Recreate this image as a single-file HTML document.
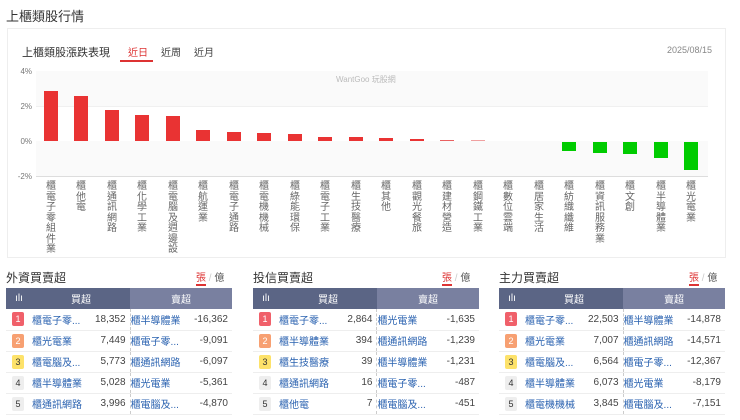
<!DOCTYPE html><html><head><meta charset="utf-8"><style>
*{margin:0;padding:0;box-sizing:border-box}
body{width:740px;height:420px;background:#fff;font-family:"Liberation Sans","Noto Sans CJK TC",sans-serif;position:relative;overflow:hidden;color:#333}
.a{position:absolute}
.lbl{position:absolute;font-size:10px;line-height:10.5px;color:#666;width:12px;text-align:center}
.bar{position:absolute;width:14px}
.yl{position:absolute;left:14px;font-size:8px;color:#777;width:18px;text-align:right}
table{border-collapse:collapse;font-size:10px}
.tb{position:absolute;top:288px;width:226px}
.tb td{height:21px;border-bottom:1px solid #eee}
.hd td{background:#5b6585;color:#fff;text-align:center;height:21px;border:none}
.hd td.r{background:#7980a0}
.rk{display:inline-block;width:12px;height:14px;line-height:14px;text-align:center;font-size:9px;border-radius:2px;margin-left:6px}
.n{color:#2a62b0}
.v{text-align:right;color:#444;padding-right:4px}
.sep{border-left:1px dashed #ccc}
.tt{position:absolute;top:269px;font-size:12px;color:#333}
.tg{position:absolute;top:269px;font-size:10px;color:#555}
</style></head><body>
<div class="a" style="left:6px;top:6px;font-size:13px;color:#333">上櫃類股行情</div>
<div class="a" style="left:7px;top:28px;width:719px;height:230px;border:1px solid #eee"></div>
<div class="a" style="left:22px;top:44px;font-size:11px">上櫃類股漲跌表現</div>
<div class="a" style="left:128px;top:44px;font-size:10px;color:#d33">近日</div>
<div class="a" style="left:120px;top:60px;width:33px;height:2px;background:#d33"></div>
<div class="a" style="left:161px;top:44px;font-size:10px;color:#444">近周</div>
<div class="a" style="left:194px;top:44px;font-size:10px;color:#444">近月</div>
<div class="a" style="left:667px;top:45px;font-size:9px;color:#888">2025/08/15</div>
<div class="a" style="left:36px;top:71px;width:672px;height:35px;background:#fafafa"></div>
<div class="a" style="left:36px;top:141px;width:672px;height:35px;background:#fafafa"></div>
<div class="a" style="left:36px;top:106px;width:672px;height:1px;background:#f0f0f0"></div>
<div class="a" style="left:36px;top:176px;width:672px;height:1px;background:#ddd"></div>
<div class="a" style="left:336px;top:74px;font-size:8px;color:#bbb">WantGoo 玩股網</div>
<div class="yl" style="top:67px">4%</div><div class="yl" style="top:102px">2%</div><div class="yl" style="top:137px">0%</div><div class="yl" style="top:172px">-2%</div>
<div class="bar" style="left:44px;top:91px;height:50px;background:#e93333"></div>
<div class="bar" style="left:74px;top:96px;height:45px;background:#e93333"></div>
<div class="bar" style="left:105px;top:110px;height:31px;background:#e93333"></div>
<div class="bar" style="left:135px;top:115px;height:26px;background:#e93333"></div>
<div class="bar" style="left:166px;top:116px;height:25px;background:#e93333"></div>
<div class="bar" style="left:196px;top:130px;height:11px;background:#e93333"></div>
<div class="bar" style="left:227px;top:132px;height:9px;background:#e93333"></div>
<div class="bar" style="left:257px;top:133px;height:8px;background:#e93333"></div>
<div class="bar" style="left:288px;top:134px;height:7px;background:#e93333"></div>
<div class="bar" style="left:318px;top:137px;height:4px;background:#e93333"></div>
<div class="bar" style="left:349px;top:137px;height:4px;background:#e93333"></div>
<div class="bar" style="left:379px;top:138px;height:3px;background:#e93333"></div>
<div class="bar" style="left:410px;top:139px;height:2px;background:#e93333"></div>
<div class="bar" style="left:440px;top:140px;height:1px;background:#e96060"></div>
<div class="bar" style="left:471px;top:140px;height:1px;background:#f0a0a0"></div>
<div class="bar" style="left:562px;top:142px;height:9px;background:#0c0"></div>
<div class="bar" style="left:593px;top:142px;height:11px;background:#0c0"></div>
<div class="bar" style="left:623px;top:142px;height:12px;background:#0c0"></div>
<div class="bar" style="left:654px;top:142px;height:16px;background:#0c0"></div>
<div class="bar" style="left:684px;top:142px;height:28px;background:#0c0"></div>
<div class="lbl" style="left:45px;top:182px">櫃<br>電<br>子<br>零<br>組<br>件<br>業</div>
<div class="lbl" style="left:75px;top:182px">櫃<br>他<br>電</div>
<div class="lbl" style="left:106px;top:182px">櫃<br>通<br>訊<br>網<br>路</div>
<div class="lbl" style="left:136px;top:182px">櫃<br>化<br>學<br>工<br>業</div>
<div class="lbl" style="left:167px;top:182px">櫃<br>電<br>腦<br>及<br>週<br>邊<br>設</div>
<div class="lbl" style="left:197px;top:182px">櫃<br>航<br>運<br>業</div>
<div class="lbl" style="left:228px;top:182px">櫃<br>電<br>子<br>通<br>路</div>
<div class="lbl" style="left:258px;top:182px">櫃<br>電<br>機<br>機<br>械</div>
<div class="lbl" style="left:289px;top:182px">櫃<br>綠<br>能<br>環<br>保</div>
<div class="lbl" style="left:319px;top:182px">櫃<br>電<br>子<br>工<br>業</div>
<div class="lbl" style="left:350px;top:182px">櫃<br>生<br>技<br>醫<br>療</div>
<div class="lbl" style="left:380px;top:182px">櫃<br>其<br>他</div>
<div class="lbl" style="left:411px;top:182px">櫃<br>觀<br>光<br>餐<br>旅</div>
<div class="lbl" style="left:441px;top:182px">櫃<br>建<br>材<br>營<br>造</div>
<div class="lbl" style="left:472px;top:182px">櫃<br>鋼<br>鐵<br>工<br>業</div>
<div class="lbl" style="left:502px;top:182px">櫃<br>數<br>位<br>雲<br>端</div>
<div class="lbl" style="left:533px;top:182px">櫃<br>居<br>家<br>生<br>活</div>
<div class="lbl" style="left:563px;top:182px">櫃<br>紡<br>織<br>纖<br>維</div>
<div class="lbl" style="left:594px;top:182px">櫃<br>資<br>訊<br>服<br>務<br>業</div>
<div class="lbl" style="left:624px;top:182px">櫃<br>文<br>創</div>
<div class="lbl" style="left:655px;top:182px">櫃<br>半<br>導<br>體<br>業</div>
<div class="lbl" style="left:685px;top:182px">櫃<br>光<br>電<br>業</div>

<div class="tt" style="left:6px">外資買賣超</div>
<div class="tg" style="left:196px"><span style="color:#d33;border-bottom:2px solid #d33">張</span> <span style="color:#ccc">/</span> 億</div>
<table class="tb" style="left:6px">
<tr class="hd"><td style="width:26px">ılı</td><td colspan="2">買超</td><td class="r" colspan="2">賣超</td></tr>
<tr><td><span class="rk" style="background:#f0606a;color:#fff">1</span></td><td class="n">櫃電子零...</td><td class="v">18,352</td><td class="n sep">櫃半導體業</td><td class="v">-16,362</td></tr>
<tr><td><span class="rk" style="background:#f7a072;color:#fff">2</span></td><td class="n">櫃光電業</td><td class="v">7,449</td><td class="n sep">櫃電子零...</td><td class="v">-9,091</td></tr>
<tr><td><span class="rk" style="background:#fde26a">3</span></td><td class="n">櫃電腦及...</td><td class="v">5,773</td><td class="n sep">櫃通訊網路</td><td class="v">-6,097</td></tr>
<tr><td><span class="rk" style="background:#eee">4</span></td><td class="n">櫃半導體業</td><td class="v">5,028</td><td class="n sep">櫃光電業</td><td class="v">-5,361</td></tr>
<tr><td><span class="rk" style="background:#eee">5</span></td><td class="n">櫃通訊網路</td><td class="v">3,996</td><td class="n sep">櫃電腦及...</td><td class="v">-4,870</td></tr>
</table>

<div class="tt" style="left:253px">投信買賣超</div>
<div class="tg" style="left:442px"><span style="color:#d33;border-bottom:2px solid #d33">張</span> <span style="color:#ccc">/</span> 億</div>
<table class="tb" style="left:253px">
<tr class="hd"><td style="width:26px">ılı</td><td colspan="2">買超</td><td class="r" colspan="2">賣超</td></tr>
<tr><td><span class="rk" style="background:#f0606a;color:#fff">1</span></td><td class="n">櫃電子零...</td><td class="v">2,864</td><td class="n sep">櫃光電業</td><td class="v">-1,635</td></tr>
<tr><td><span class="rk" style="background:#f7a072;color:#fff">2</span></td><td class="n">櫃半導體業</td><td class="v">394</td><td class="n sep">櫃通訊網路</td><td class="v">-1,239</td></tr>
<tr><td><span class="rk" style="background:#fde26a">3</span></td><td class="n">櫃生技醫療</td><td class="v">39</td><td class="n sep">櫃半導體業</td><td class="v">-1,231</td></tr>
<tr><td><span class="rk" style="background:#eee">4</span></td><td class="n">櫃通訊網路</td><td class="v">16</td><td class="n sep">櫃電子零...</td><td class="v">-487</td></tr>
<tr><td><span class="rk" style="background:#eee">5</span></td><td class="n">櫃他電</td><td class="v">7</td><td class="n sep">櫃電腦及...</td><td class="v">-451</td></tr>
</table>

<div class="tt" style="left:499px">主力買賣超</div>
<div class="tg" style="left:689px"><span style="color:#d33;border-bottom:2px solid #d33">張</span> <span style="color:#ccc">/</span> 億</div>
<table class="tb" style="left:499px">
<tr class="hd"><td style="width:26px">ılı</td><td colspan="2">買超</td><td class="r" colspan="2">賣超</td></tr>
<tr><td><span class="rk" style="background:#f0606a;color:#fff">1</span></td><td class="n">櫃電子零...</td><td class="v">22,503</td><td class="n sep">櫃半導體業</td><td class="v">-14,878</td></tr>
<tr><td><span class="rk" style="background:#f7a072;color:#fff">2</span></td><td class="n">櫃光電業</td><td class="v">7,007</td><td class="n sep">櫃通訊網路</td><td class="v">-14,571</td></tr>
<tr><td><span class="rk" style="background:#fde26a">3</span></td><td class="n">櫃電腦及...</td><td class="v">6,564</td><td class="n sep">櫃電子零...</td><td class="v">-12,367</td></tr>
<tr><td><span class="rk" style="background:#eee">4</span></td><td class="n">櫃半導體業</td><td class="v">6,073</td><td class="n sep">櫃光電業</td><td class="v">-8,179</td></tr>
<tr><td><span class="rk" style="background:#eee">5</span></td><td class="n">櫃電機機械</td><td class="v">3,845</td><td class="n sep">櫃電腦及...</td><td class="v">-7,151</td></tr>
</table>
</body></html>
